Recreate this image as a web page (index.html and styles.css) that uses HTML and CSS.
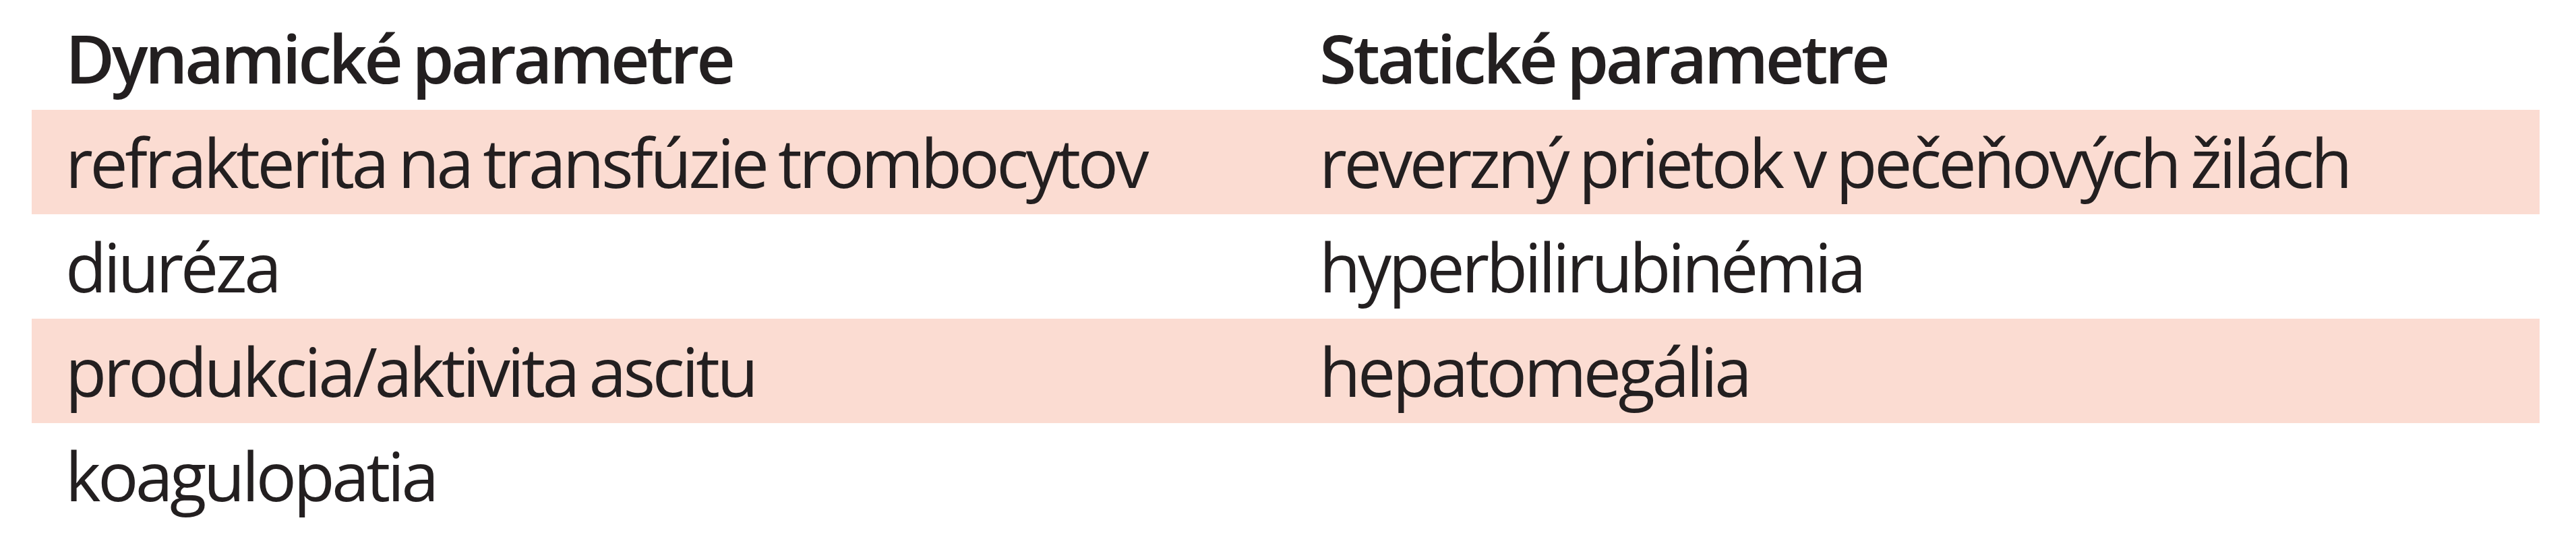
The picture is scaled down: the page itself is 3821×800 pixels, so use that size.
FILE: index.html
```html
<!DOCTYPE html>
<html lang="sk"><head><meta charset="utf-8"><title>Parametre</title><link rel="stylesheet" href="styles.css"></head>
<body>
<table class="params">
  <thead>
    <tr><th>Dynamické parametre</th><th>Statické parametre</th></tr>
  </thead>
  <tbody>
    <tr class="shade"><td>refrakterita na transfúzie trombocytov</td><td>reverzný prietok v pečeňových žilách</td></tr>
    <tr><td>diuréza</td><td>hyperbilirubinémia</td></tr>
    <tr class="shade"><td>produkcia/aktivita ascitu</td><td>hepatomegália</td></tr>
    <tr><td>koagulopatia</td><td></td></tr>
  </tbody>
</table>
</body></html>
```
FILE: styles.css
```css
html, body { background: #ffffff; }
body { margin: 0; padding: 8px 0 0 47px; }
.params {
  border-collapse: collapse;
  table-layout: fixed;
  width: 3720px;
  font-family: "Open Sans", "Noto Sans", sans-serif;
  font-size: 100px;
  letter-spacing: -4.4px;
  word-spacing: -4px;
  color: #231f20;
}
.params th, .params td {
  height: 155px;
  line-height: 155px;
  padding: 0 0 0 50px;
  text-align: left;
  vertical-align: top;
  white-space: nowrap;
  width: 50%;
}
.params th { font-weight: 600; }
.params td { font-weight: 400; }
.params .shade td { background: #fbdcd2; }
```
